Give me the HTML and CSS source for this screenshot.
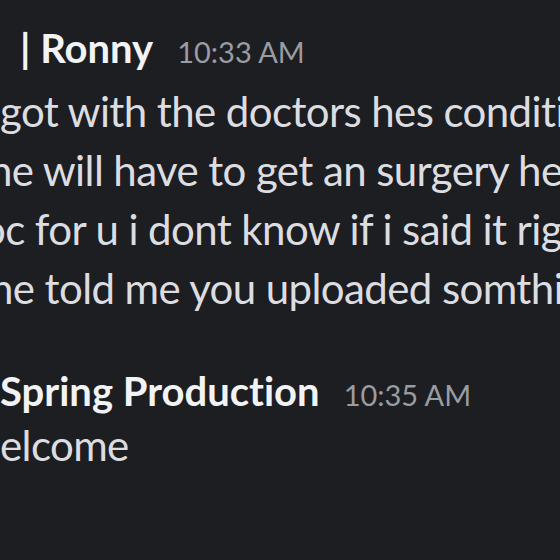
FILE: index.html
```html
<!DOCTYPE html>
<html lang="en">
  <head>
    <meta charset="UTF-8" />
    <title>Chat</title>
    <link rel="stylesheet" href="styles.css">
  </head>
  <body>
    <div class="chat">
      <!-- first message group -->
      <div class="msg msg-first">
        <div class="msg-head head-ronny">
          <span class="name">| Ronny</span>
          <span class="time">10:33 AM</span>
        </div>
        <div class="msg-text">
          <div class="line">got with the doctors hes condition is bad</div>
          <div class="line cut-h">he will have to get an surgery he said</div>
          <div class="line cut-o">oc for u i dont know if i said it right</div>
          <div class="line cut-h2">he told me you uploaded somthing</div>
        </div>
      </div>

      <!-- reply -->
      <div class="msg msg-second">
        <div class="msg-head">
          <span class="name">Spring Production</span>
          <span class="time">10:35 AM</span>
        </div>
        <div class="msg-text">
          <div class="line">elcome</div>
        </div>
      </div>
    </div>
  </body>
</html>
```
FILE: styles.css
```css
/* General styles */
html,
body {
  margin: 0;
  padding: 0;
  height: 100%;
  overflow: hidden;
  background-color: #1d1e22;
  font-family: Lato, "Noto Sans", sans-serif;
  font-variant-ligatures: none;
}

.chat {
  padding-top: 26px;
  white-space: nowrap;
}

/* Message groups */
.msg-second {
  margin-top: 51px;
}
.msg-head {
  display: flex;
  align-items: baseline;
  height: 44px;
  line-height: 44px;
}
.head-ronny {
  padding-left: 20px;
  margin-bottom: 12px;
}
.msg-second .msg-head {
  margin-bottom: 3px;
}
.name {
  font-size: 40px;
  font-weight: 700;
  color: #f2f3f5;
}
.time {
  margin-left: 24px;
  font-size: 29px;
  color: #9a9ca3;
}

/* Message text */
.msg-text {
  font-size: 42px;
  line-height: 59px;
  letter-spacing: -0.6px;
  color: #dcdde0;
}
.cut-h {
  margin-left: -11px;
}
.cut-o {
  margin-left: -18px;
}
.cut-h2 {
  margin-left: -10px;
}
```
